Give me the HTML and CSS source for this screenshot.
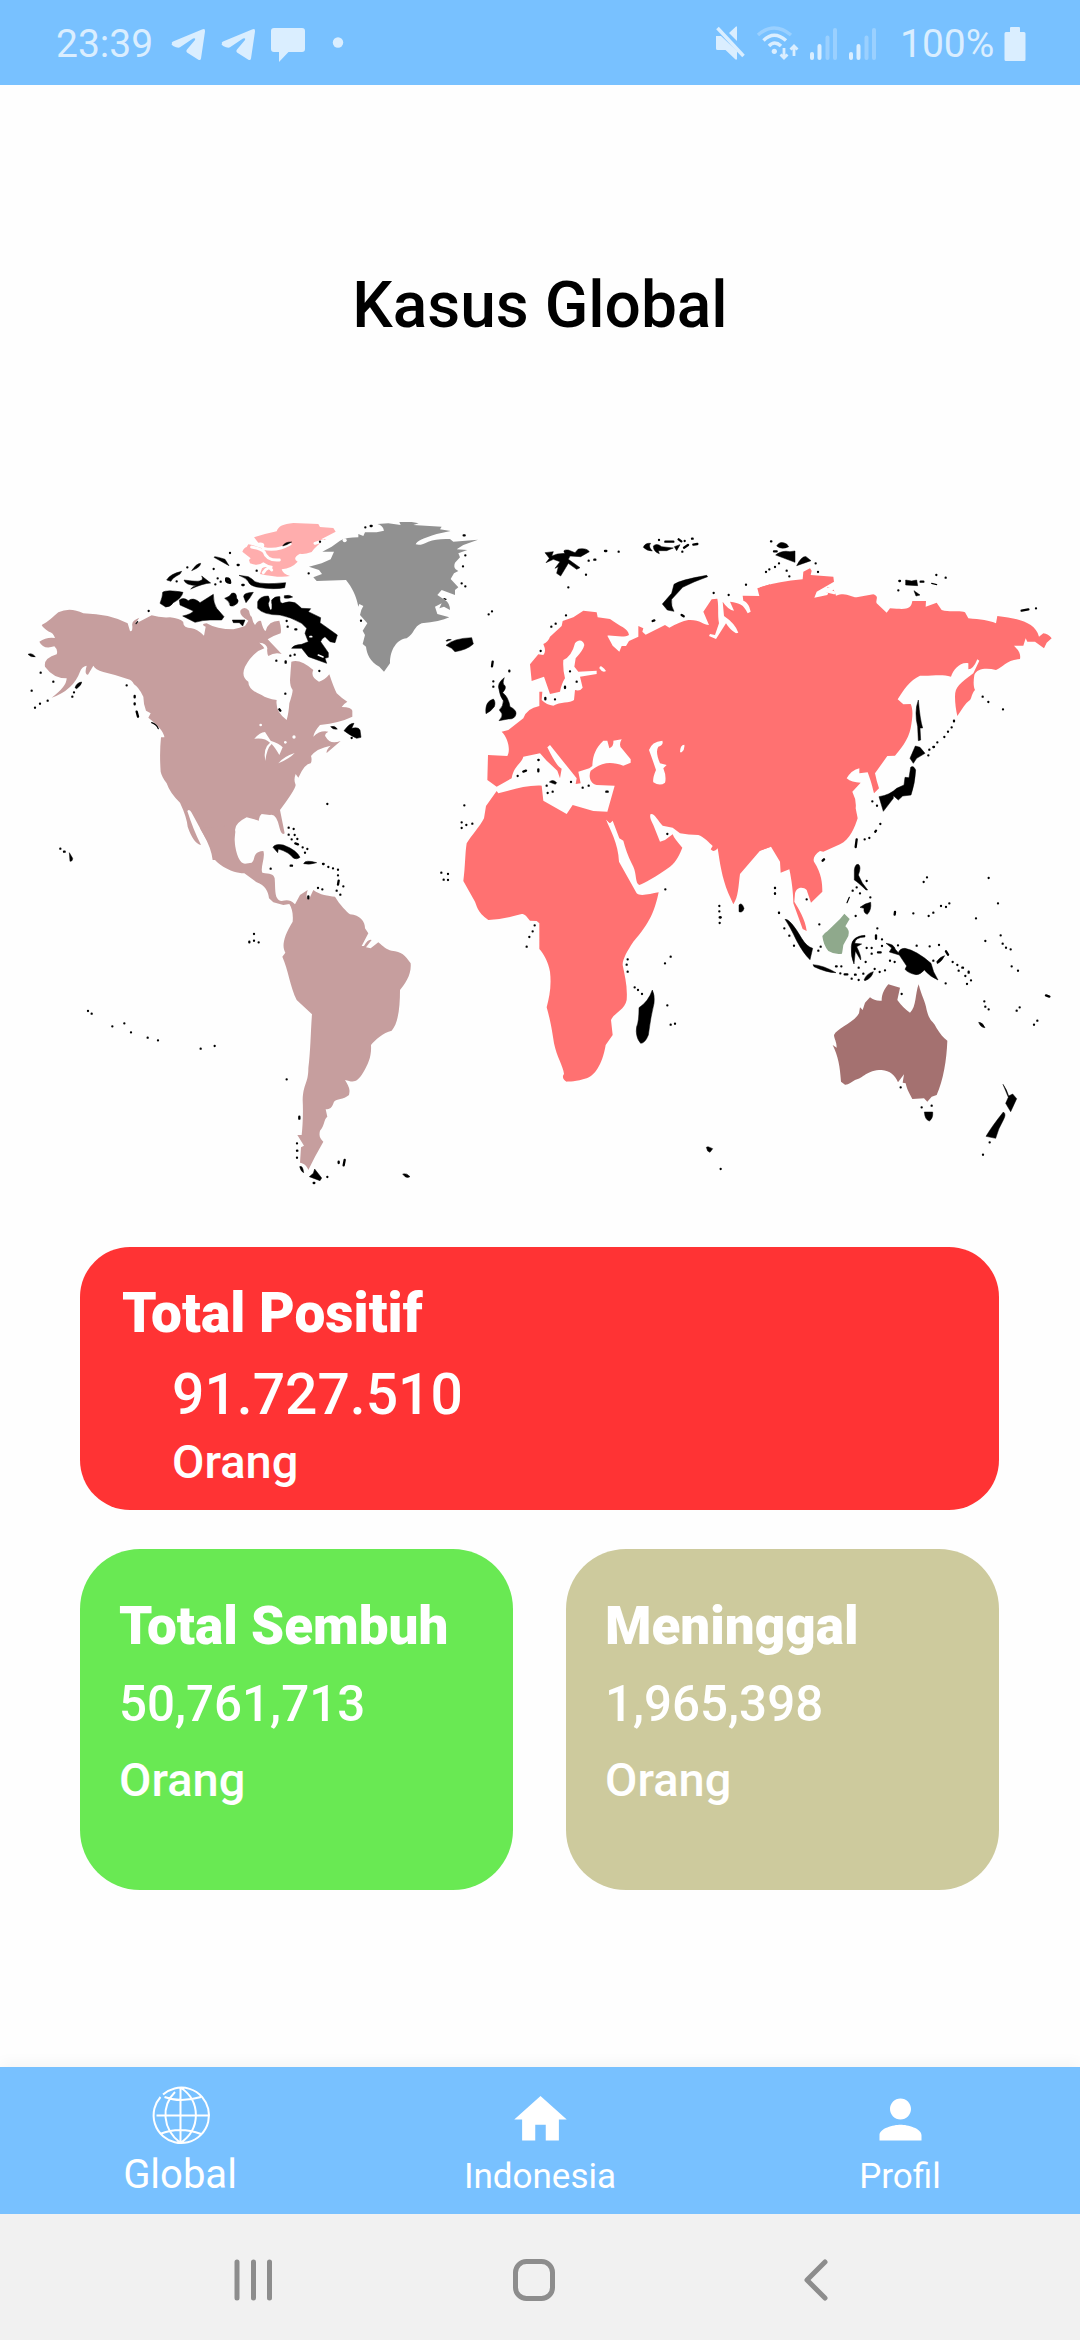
FILE: index.html
```html
<!DOCTYPE html>
<html lang="id">
<head>
<meta charset="utf-8">
<title>Kasus Global</title>
<link rel="stylesheet" href="styles.css">
</head>
<body>
<div class="screen">
  <header class="status">
    <span class="clock">23:39</span>
    <svg class="notif" width="174" height="40" viewBox="170 26 174 40">
      <path id="tg" d="M172 45.500Q171 44.500 173 43.500L202 31.500Q205.500 30 205 33.500L201 60.500Q200.500 63 198 61.500L187 54.500Q185.500 53 187 51.500L195 42Q196 39.500 193 40.500L180 49.300Q178.500 50 176 49.200Q172.500 48 171.500 46.500Z"/>
      <use href="#tg" x="50"/>
      <path d="M274 30h28q3 0 3 3v18q0 3-3 3h-13.500l-9.500 10v-10h-5q-3 0-3-3v-18q0-3 3-3z"/>
      <circle cx="338" cy="44.500" r="5.200"/>
    </svg>
    <svg class="signals" width="164" height="40" viewBox="714 26 164 40">
      <path d="M716 38h5l16 15v8.500h-1.500l-10-9.500h-8q-1.500 0-1.500-1.500zM729 35l7-6.500h1V43z"/>
      <path class="line" d="M717.500 30l26 28"/>
      <g class="line">
        <path class="dim" d="M758 37Q774 23 791 37"/>
        <path d="M763.500 42.500Q774 32 786 42.500M769 48Q774.500 42 781 48"/>
        <path class="thin" d="M784 50v10m-3.500-3.500l3.500 3.500 3.500-3.500M794 58V48m-3.500 3.500l3.500-3.500 3.500 3.500"/>
      </g>
      <circle cx="774.300" cy="53.300" r="2.600"/>
      <g class="bars">
        <path d="M812 56v4M819.500 48v12M851 56v4M858.500 48v12"/>
        <path class="dim" d="M827.500 39.500V60M835 32V60M866.500 39.500V60M874 32V60"/>
      </g>
    </svg>
    <span class="charge">100%</span>
    <svg class="battery" width="22" height="36" viewBox="0 0 22 36"><path d="M7 1h8q1 0 1 1v4h4q1.500 0 1.500 1.500v26q0 1.500-1.500 1.500H2q-1.500 0-1.500-1.500v-26Q.5 6 2 6h4V2q0-1 1-1z"/></svg>
  </header>

  <main class="content">
    <h1 class="title">Kasus Global</h1>

    <svg class="map" width="1080" height="700" viewBox="0 0 3240 2100">
      <!-- North America and the Arctic islands -->
      <path class="america" d="M125 375C145 365 160 350 175 337Q210 320 250 340Q330 342 383 370L390 393Q398 396 397 378Q393 362 418 353L405 372L455 346Q480 354 510 352Q540 355 550 366Q548 384 575 385Q592 388 612 407L617 380Q600 372 620 370Q650 388 700 388Q720 384 735 378L745 362Q715 345 722 330Q735 317 747 332Q750 348 755 350Q758 366 765 375Q775 360 783 363Q790 392 797 393Q805 362 838 362Q845 385 842 400Q818 408 803 418L845 462Q825 455 805 468Q800 458 802 445Q800 430 778 428Q790 438 793 445Q760 455 735 500Q722 530 745 545Q745 570 785 585Q800 596 830 600Q825 635 860 660Q866 640 868 610Q878 580 878 570Q870 560 870 540Q872 510 874 485Q900 475 940 510Q930 530 957 545Q975 540 988 523Q1000 560 1010 580Q1025 595 1042 605Q1030 612 1025 621Q1055 622 1057 632V650Q1020 668 960 675Q942 695 940 710Q960 690 985 695Q970 703 978 712Q990 735 1022 723L980 759Q978 750 992 737Q950 745 933 768Q937 780 932 790Q915 790 895 833L887 822Q880 840 887 855Q885 870 840 930L854 1000Q845 1008 839 985Q830 940 810 945L785 942Q775 950 777 962L740 952Q700 972 706 995Q700 1040 705 1080H638Q634 1045 610 1003L575 938Q568 925 562 933Q580 990 603 1035Q580 1030 563 980Q560 950 540 908Q510 880 500 850Q485 830 482 815Q478 760 483 712H493Q492 690 445 653L452 640L438 632Q430 610 430 590Q415 560 402 553Q395 540 385 538Q350 525 310 516Q285 508 280 497L264 524Q252 525 260 497Q245 500 240 515Q220 570 155 593Q200 560 200 535Q160 535 135 500Q130 475 170 463Q175 450 163 439Q130 450 118 425Q140 410 165 414Q160 398 147 395Q130 385 125 375Z"/>
      <g class="sea">
        <path d="M763 716Q780 697 795 696L812 722Q838 730 848 742L838 765Q825 742 815 732Q800 745 796 783Q788 745 810 728Q795 712 763 716Z"/>
        <path d="M835 790Q850 770 884 759Q870 775 835 790Z"/>
        <circle cx="782" cy="675" r="4"/><circle cx="882" cy="711" r="5"/><circle cx="856" cy="727" r="4"/>
      </g>
      <path class="ellesmere" d="M762 112Q800 100 830 94C835 78 850 72 880 69L955 72L960 81L1000 84L1007 95L965 117H978Q950 135 935 156Q910 165 900 161Q875 175 893 185Q875 205 845 208Q848 222 870 228Q840 235 780 222L786 205Q800 195 816 208L818 198Q800 195 790 187Q775 200 750 190L747 180L752 175L727 155Q732 143 740 141L745 133Q770 138 790 146Q800 125 775 128Z"/>
      <path class="channel" d="M755 141Q785 147 792 155Q800 183 838 180M790 145Q830 155 870 132M790 218Q805 195 815 210M945 130L970 122"/>
      <g class="land">
        <path d="M848 138Q855 125 875 126L860 134ZM500 240Q510 222 545 214L540 222Q515 235 513 244ZM575 212Q590 190 602 190Q602 198 590 205ZM552 240Q590 245 598 243Q612 240 605 228L632 249Q610 250 572 267Q578 258 590 257Q555 255 552 240ZM642 172Q640 166 675 178L687 197ZM717 226L745 230Q755 235 765 245Q785 255 857 248L854 263Q820 270 770 261Q750 257 745 245Q740 235 717 226Z"/>
        <path d="M480 310Q488 290 488 277Q500 268 549 277Q545 295 520 308Q510 322 497 321ZM538 300Q550 290 565 302Q580 290 600 308L640 283Q640 310 650 325L672 350L665 360H630Q610 360 585 367L548 348Q575 342 580 333L540 315ZM674 295Q690 290 695 280Q710 275 710 295Q718 302 712 310Q700 322 690 317Q690 305 674 295ZM731 290Q730 278 760 277Q750 295 738 308ZM853 287Q870 283 878 291Q865 297 853 294Z"/>
        <path d="M773 305Q780 288 805 288Q812 300 805 310Q805 325 815 327V300Q825 288 840 290Q838 310 848 310Q865 302 885 308Q895 315 905 325L932 326L925 335L962 353L960 368L1012 405L1005 428L990 425L975 410Q965 415 962 425L985 458V472L975 475L980 490L925 470L905 445L875 445Q880 435 905 433L925 425L915 400L920 385L905 370Q870 350 840 345Q790 345 773 325ZM697 360H735L728 378L718 368H700Z"/>
      </g>
      <path class="ring" d="M679 236Q690 235 690 248Q677 248 679 236Z"/>
      <path class="hole" d="M812 312v14M930 410h5M955 465l14 6"/>
      <g class="land">
        <path d="M84 463Q95 457 106 470Q93 473 84 463ZM225 563Q230 548 245 546Q245 555 230 566ZM1032 692Q1050 668 1062 670L1055 685Q1075 680 1080 690L1083 712L1070 715Q1045 703 1032 692ZM992 680Q1005 675 1012 687Q1000 690 992 680Z"/>
        <path d="M618 436Q640 415 695 413L700 432Q680 450 645 455L635 445ZM618 422Q625 416 634 419L620 424Z" transform="translate(720)"/>
        <path d="M915 158L940 155L935 168L952 162L975 160Q965 148 985 150L1005 158L1015 147Q1040 143 1048 155L1022 170L990 168L985 178L1020 203L1010 208L985 190L962 228L950 220L955 200L945 205L960 185L940 178L918 188L928 175Z" transform="translate(720)"/>
        <path d="M777 568Q770 550 793 533Q785 553 795 557Q800 565 788 578Q805 590 810 620Q830 630 828 642Q825 658 805 657L777 662Q790 648 785 640L778 630Q790 618 790 602Q780 590 777 568ZM738 641Q733 605 760 597Q768 605 763 620Q752 635 738 641Z" transform="translate(720)"/>
      </g>
      <path class="dots" d="M122 518h0M160 545h0M95 572h0M105 623h0M120 611h0M143 602h0M217 590h0M222 577h0M380 556h0M404 588v4M404 610v3M410 635l4 15M446 333h0M562 202h0M530 244h0M641 207h0M646 253h0M662 245h0M653 235h0M690 159h0M713 195h3M770 212h0M727 255h4M860 363h0M863 380h0M886 388h3M829 482h0M857 484v4M871 467h0M884 464h0M958 513h0M856 581h0M838 628l3 4M982 912h0M1055 714h0M926 220h0M960 125h0M1083 362h0M1096 82h0M1112 78h3M1391 106h3M1396 166h0M1389 199h0M1385 250h0M1396 259h0M1466 343h0M1476 334h0M1478 485l-2 14M1528 512v2M1480 544h0M1480 560h0M1393 916h0M1385 967h0M1399 975h0M1417 971h0M1385 984h0"/>
      <path class="dots fine" d="M455 668q15 5 20 18M408 371l5-6M1332 296l6 2"/>

      <path class="greenland" d="M1130 97L1152 92Q1148 75 1132 72L1165 70L1202 75L1198 66H1235L1256 70L1240 75L1325 80L1320 88L1352 93L1310 102Q1250 120 1247 133Q1262 138 1285 125Q1310 115 1350 117L1360 125L1434 119L1390 135L1370 148L1402 150L1375 160L1380 172L1365 188Q1360 200 1367 208L1375 213L1362 220L1352 237L1375 262L1365 270V285L1325 270L1312 285L1335 300Q1350 310 1350 330L1332 320L1318 325L1325 310L1305 320L1312 342L1348 352Q1320 365 1265 370C1240 380 1245 400 1220 415C1190 418 1170 450 1170 490L1152 515L1138 500C1110 485 1100 460 1098 440L1088 432L1095 405L1088 392L1102 370L1080 345Q1082 330 1090 318L1078 312L1075 320C1070 290 1055 260 1038 240L950 243L940 232L966 222L957 210L927 200L965 190L992 178L1002 155L967 155L995 140L1020 122Q1040 112 1075 112V102L1090 108L1095 97Z"/>
      <circle class="sea" cx="1034" cy="121" r="6"/>

      <!-- Europe, western and central Asia -->
      <g transform="translate(1440)">
        <path class="eurasia" d="M150 493L175 463L190 465Q200 455 190 432Q205 425 210 410L245 378L248 363L280 352L310 332L350 337L353 352L390 357C420 380 445 385 447 405C430 415 400 405 382 407L398 437L418 455L425 438H438L447 423L475 410V378L490 385L487 395L497 404L555 375L568 383Q600 365 625 360C660 358 670 375 687 375L670 335L695 298L712 296C717 320 712 340 717 370L705 405L690 402L687 408L708 417L738 370Q750 390 768 400L775 398Q765 370 732 348L728 305Q745 330 762 332L750 305C780 310 790 312 803 340L812 335C808 315 800 305 790 302L788 287L838 288L832 265L870 253V1041L840 1052L780 1122C775 1160 775 1190 760 1213L745 1180C725 1130 720 1090 713 1045Q702 1060 692 1048L698 1038C690 1030 670 1010 655 1005Q625 1005 600 1000L578 983L548 977C535 965 525 940 512 942C508 950 512 960 520 975L540 1025L555 1020L578 1003Q582 1015 607 1043C600 1060 590 1085 570 1100C530 1130 490 1150 478 1155C465 1150 470 1120 460 1100C440 1060 435 1040 430 1022L418 1015L398 962L390 970L370 950L382 935L404 857L350 855C330 850 325 830 332 812L345 803C370 785 400 785 430 797L452 788V778L425 745Q415 735 425 718L400 722Q402 740 388 745L382 722H370C345 745 338 770 337 798L328 805L295 815L302 850L287 852L290 835L210 735L202 742Q230 800 245 806L240 835L232 812L200 782L180 760L130 770C125 790 100 800 95 835L50 860L22 840L24 765L82 768C92 750 85 715 65 695L85 690L130 655Q140 625 178 618V575H187L185 600Q200 615 220 617C240 605 270 610 282 600L285 570Q300 575 308 563L300 530L350 522V512L295 515L283 500L287 475Q310 450 313 435C310 420 295 417 285 430Q275 470 250 480Q248 510 255 535Q245 550 240 575L210 582L192 530L155 543Z"/>
        <g class="sea">
          <path d="M507 750Q515 725 547 722Q552 735 535 740Q525 755 540 790L560 795L550 805Q560 830 555 848Q540 860 520 847Q517 835 528 810Q518 780 507 750ZM600 757Q600 735 613 734Q615 748 605 757ZM358 505Q360 490 378 513Q368 520 358 505Z"/>
        </g>
        <g class="land">
          <path d="M547 312L575 280L582 253Q600 240 680 226L683 230Q640 245 608 262L575 298Q572 318 582 334L562 330ZM490 142Q495 128 512 130Q503 140 517 153Q500 153 490 142ZM520 138Q530 128 545 140L580 144L560 152H535L538 161Q520 155 520 138ZM583 140L600 134L590 152ZM208 846Q218 836 230 848L226 853Z"/>
          <path d="M890 138Q900 120 920 132L926 140Q905 150 890 138ZM887 165Q905 150 930 155L945 153V187ZM950 197Q965 168 978 170L993 182Z"/>
          <path d="M777 1215Q785 1205 792 1225Q788 1240 777 1235Z"/>
        </g>
        <path class="dots" d="M326 182h0M343 179h3M375 153h4M416 155h0M318 224h0M265 262h0M537 120h0M556 125l24 0M596 118l8 6M614 123h0M636 116h2M612 143l12-8M640 134l12-2M607 155h0M518 363l5-2M605 345l6 4M258 346h0M227 371h0M214 380h0M182 453h0M270 514h0M290 545h0M255 560v4M196 594v4M225 598h0M175 780h1M175 808v6M130 815l8-3M113 828h0M200 857h0M203 879h0M218 875h0M273 846h0M308 863h0M326 857h0M379 875h4M562 1002h0M556 1168h0M701 279h0M746 285h0M798 254h0M873 124h1M882 154h8M858 216h0M868 208h0M885 201h0M897 190h0M920 212h0M928 229h0M1007 190h0M1014 216h0M885 1164h0M885 1180h0M718 1218h0M718 1234h0M721 1252h0M897 1238h0"/>
      </g>

      <!-- East Asia -->
      <g transform="translate(2220)">
        <path class="eurasia" d="M60 262Q110 245 188 238L190 215L210 205L215 212L212 225L280 230L282 245L230 275L223 293L262 285L265 278L255 275L262 262Q285 265 288 287C320 275 330 292 350 292L400 283C420 290 405 300 410 310L440 338L450 325C500 328 512 330 517 303H558L557 320L590 308L605 330C630 338 660 330 675 337L685 355C720 358 750 362 768 370L772 348C830 355 885 365 897 410L910 400Q925 402 935 415L920 428L912 445L885 425L862 425L857 415L850 437L822 437C840 455 842 465 840 477C800 480 790 500 768 510C740 503 710 505 703 525C700 545 700 560 705 570C695 580 695 595 690 600C675 610 665 630 652 648C648 630 645 610 645 590C645 560 660 550 700 520L718 482L712 478Q700 508 685 508L685 490C660 485 640 510 633 530C600 520 570 530 540 527C510 540 490 570 473 598L490 613L512 612C520 630 518 650 512 685C505 720 480 750 465 767L442 768L405 820Q410 845 417 865L402 880C395 850 388 830 383 817L358 820V805Q335 810 320 835Q335 848 362 848L337 875Q350 900 347 925L353 955C345 980 330 1020 300 1033L250 1055L240 1053C225 1062 218 1075 222 1085C245 1120 247 1150 247 1175L213 1208L200 1170C190 1160 170 1160 165 1180L163 1205C175 1225 197 1260 200 1293L188 1287L160 1210C160 1180 155 1140 148 1108L122 1118L120 1085L93 1040L60 1052Z"/>
        <path class="channel" d="M258 272l25 6M260 268l15 0"/>
        <g class="land">
          <path d="M535 600Q540 660 548 684H540L542 720L535 722L533 680Q522 635 535 600ZM526 738L540 742L555 760L530 775L520 790L510 775ZM512 802Q520 795 527 810Q525 850 513 885L488 888L475 900L460 887V895L430 934L417 890Q450 885 470 865L492 855L495 832L507 833ZM497 240L515 243L530 240L533 257L497 255ZM522 272L540 285L528 288Z"/>
          <path d="M343 1110Q345 1092 355 1093Q365 1100 355 1125Q365 1150 383 1170L378 1170Q352 1145 343 1140ZM360 1222Q375 1210 392 1207Q395 1230 382 1243Q370 1240 372 1225Z"/>
        </g>
        <path class="dots" d="M478 243h2M475 271h0M542 245h8M589 225h0M617 233h0M845 332l20-4M888 325h0M728 590h0M745 606h0M789 628h0M642 662v2M635 682h0M624 695h0M613 711h0M592 727h0M580 741h2M568 749h0M565 766h0M397 904h0M411 917h0M421 972h0M408 992l-2 3M388 1014h0M374 1018h0M350 1018l-3 23M248 1082l4-4M380 1143h0M350 1162h0M338 1172h0M360 1180h0M391 1192h0M347 1248h0M200 1198h0M561 1132h0M551 1146h0M746 1134h0M774 1210h0M628 1210h0M618 1221h0M603 1218h0M580 1238h0M566 1248h0M520 1240h0M465 1236l-1 8M708 1255h0"/>
        <path class="dots fine" d="M575 250l15 4M328 1192l-7 16"/>
      </g>

      <!-- Central and South America -->
      <g transform="translate(0 960)">
        <path class="america" d="M600 25L706 15Q700 50 704 65C708 105 720 131 735 131L755 128C768 120 755 95 790 93C797 110 780 145 787 158C810 162 820 160 824 175C827 210 822 240 845 243C860 240 870 238 885 253L900 225L923 210Q915 235 927 238L940 210C960 225 985 228 1005 230C1020 255 1040 275 1050 283C1080 285 1095 305 1095 325L1105 340L1085 378H1092Q1105 355 1115 360L1098 382L1112 385L1135 367C1150 380 1160 390 1175 392C1205 395 1215 405 1232 430C1235 465 1215 490 1200 510C1200 560 1195 610 1175 632C1150 637 1125 660 1113 675C1115 710 1105 730 1090 757C1070 790 1060 787 1035 780C1050 805 1050 810 1047 825C1030 840 1010 835 1002 845C995 865 990 867 977 868L982 890C970 900 975 915 960 932C957 945 958 955 970 965L945 1010L925 1050C920 1035 910 1030 900 1028L903 982L912 977L892 945L905 945C908 920 910 880 908 840C910 790 925 790 925 745C932 690 932 630 936 583L890 540C870 500 865 450 847 410L856 398C845 380 850 350 878 305C880 280 876 265 868 252L850 255L820 247L807 235C805 215 795 195 770 187L733 160C690 160 640 125 637 105C637 85 620 60 600 25Z"/>
        <g class="land">
          <path d="M819 82Q825 70 850 75Q890 90 900 112Q890 120 880 114Q865 95 835 87L833 98ZM911 131Q915 118 950 128Q930 135 911 131ZM208 98L218 115Q218 125 210 124ZM899 1040Q908 1035 911 1058Q903 1055 899 1040ZM944 1047L965 1074L960 1082L928 1070L940 1060ZM1208 1062Q1220 1058 1230 1070Q1218 1077 1208 1062Z"/>
        </g>
        <path class="dots" d="M181 86h0M192 95h2M264 573h0M275 581h0M337 619h0M373 610h0M393 637h0M443 653h0M474 661h0M602 686h0M644 678h0M860 778h0M898 890v6M891 970h0M891 992h1M891 1013h0M941 1089h2M982 1071h0M1016 1025v4M1034 1020l-3 16M748 365v2M762 342h0M762 362h0M776 367h0M812 146h0M872 137h4M866 23h0M881 27h0M866 44h0M884 45h0M875 58h0M892 57h0M886 70l8 3M908 82h0M922 87h0M915 98h0M969 132h2M985 141h0M999 145h0M1014 149h0M1014 166h0M1016 182l-2 12M1030 199h0M1010 212h0M1021 224h0M954 204h0M967 208h0M925 229v6"/>
      </g>

      <!-- Africa -->
      <g transform="translate(1320 840)">
        <path class="eurasia" d="M502 95L516 122L508 128L498 118C510 150 535 190 537 245L590 340C600 350 630 342 656 337C645 390 630 430 580 485C560 515 547 540 548 555C555 590 563 620 560 660C555 690 520 700 513 720L518 765L497 795C490 840 470 885 440 895C410 905 385 905 380 905C370 900 365 890 372 882C370 860 350 830 342 790C335 740 328 710 320 682C328 650 335 620 330 575C325 545 310 520 298 507V430L290 423L270 422C260 410 255 402 245 402C210 412 180 418 145 420C110 395 110 375 105 365L70 303C76 260 75 220 80 190C95 165 120 140 132 115L138 78L170 33L175 40C220 28 260 15 305 17L310 62L380 102L398 75L460 93Z"/>
        <path class="land" d="M637 630Q645 645 642 670Q632 710 625 765Q615 790 602 790Q585 770 590 740Q597 725 597 683Q625 665 637 630ZM799 1102L804 1100L818 1106L810 1117L803 1113Z"/>
        <path class="dots" d="M4 278h0M24 282h0M11 299h0M24 300h0M284 436h0M278 454h0M268 471h0M260 500h0M563 538h0M560 554h0M563 575h0M584 622h0M594 630h0M606 642h0M675 550h0M692 530h0M682 676h0M692 734h0M705 731h0M839 412h3M839 429h0M842 1167h0"/>
      </g>

      <!-- South-east Asia and Oceania -->
      <g transform="translate(2220 960)">
        <path class="borneo" d="M247 348Q255 338 262 334L300 297L313 281L329 297L316 319Q330 330 325 348L310 375Q308 390 306 401Q285 405 265 393Q250 375 247 348Z"/>
        <path class="australia" d="M282 645C290 625 340 610 357 580L360 562L368 570L375 548L390 532C400 540 410 543 425 542C425 520 435 505 445 493L480 503L472 540Q490 565 510 578C530 560 525 520 536 493C545 530 555 540 560 570C570 610 580 600 590 625C600 640 610 655 622 662C620 720 610 780 590 825L575 830L562 845L552 835L517 837C505 815 500 805 497 790L488 788L492 763L474 787C465 765 450 752 425 750C380 750 370 775 345 780C335 785 325 795 315 794L303 785C300 740 295 710 278 675L290 683C290 665 282 655 282 645Z"/>
        <g class="land">
          <path d="M135 298Q150 295 185 355Q200 380 218 385L210 419Q190 400 170 362Q150 320 135 298ZM219 434Q250 436 288 458Q260 458 222 440ZM372 480Q380 460 400 455Q395 475 375 482ZM438 370Q462 372 466 388L475 398Q480 385 495 385Q530 392 573 430Q578 455 594 480Q570 470 553 450Q540 465 528 464Q505 460 495 448L500 438L478 405L448 396L455 384ZM590 425Q600 410 614 407Q605 425 592 431ZM553 876H578Q580 895 568 903Q555 900 553 876ZM789 793Q800 808 806 828L818 822L830 836L812 875L797 850L805 832ZM790 876Q800 882 790 900Q775 925 767 955L738 949Q755 920 790 876ZM716 607Q728 607 735 623Q722 623 716 607Z"/>
          <path d="M334 380Q335 348 375 346V351Q345 352 344 370L365 372L350 380Q365 410 362 420L346 393L342 432Q332 410 334 380Z"/>
        </g>
        <path class="dots" d="M105 204h0M105 221h0M117 279h0M133 325h0M148 347h0M162 377h0M238 313h0M242 380h0M235 392h0M288 439h2M304 439h0M301 460h0M314 463h8M345 464h2M335 476h0M356 480h0M370 461h0M356 443h0M377 426h0M404 447h0M419 456h0M435 451h0M450 422h0M464 426h0M412 325h0M408 346v10M426 358h0M426 378h0M414 397h8M395 401h0M395 384h0M380 384h0M474 376h0M530 377h0M569 379h0M597 375h0M618 394l6 10M580 422h0M638 426h0M652 435h0M656 452h0M667 443h2M686 455v3M676 468h0M693 481h0M681 492h0M617 490h0M485 522h0M482 802h0M545 862h0M575 857h0M749 967h0M729 1004h0M736 363h0M782 346h0M788 371h0M798 383h0M812 388h0M815 439h0M834 452h0M918 526l10 4M892 602h0M882 614h0M839 562h0M830 572h0M733 544h0M736 560h0M746 568h0"/>
      </g>
    </svg>

    <section class="card positive">
      <h2 class="name">Total Positif</h2>
      <p class="figure">91.727.510</p>
      <p class="unit">Orang</p>
    </section>
    <div class="pair">
      <section class="card recovered">
        <h2 class="name">Total Sembuh</h2>
        <p class="figure">50,761,713</p>
        <p class="unit">Orang</p>
      </section>
      <section class="card deaths">
        <h2 class="name">Meninggal</h2>
        <p class="figure">1,965,398</p>
        <p class="unit">Orang</p>
      </section>
    </div>
  </main>

  <nav class="tabs">
    <a class="tab active">
      <svg class="tab-icon" width="63" height="63" viewBox="0 0 63 63">
        <g class="globe"><path d="M14 10.500A27.700 27.700 0 1 1 11.500 13M31.500 3.500v56M7.500 31.500h52M26 8C12 22 13 45 31.500 59M31.500 3.500C52 17 52 45 31.500 59M15.500 13Q31 19 52 13M11 50Q31 42 52 50"/></g>
      </svg>
      <span>Global</span>
    </a>
    <a class="tab">
      <svg class="tab-icon" width="63" height="63" viewBox="0 0 24 24"><path d="M10 20v-6h4v6h5v-8h3L12 3 2 12h3v8z"/></svg>
      <span>Indonesia</span>
    </a>
    <a class="tab">
      <svg class="tab-icon" width="63" height="63" viewBox="0 0 24 24"><path d="M12 12c2.210 0 4-1.790 4-4s-1.790-4-4-4-4 1.790-4 4 1.790 4 4 4zm0 2c-2.670 0-8 1.340-8 4v2h16v-2c0-2.660-5.330-4-8-4z"/></svg>
      <span>Profil</span>
    </a>
  </nav>

  <footer class="system">
    <svg width="40" height="46" viewBox="0 0 40 46"><path d="M4 5v36M20.500 5v36M36.500 5v36"/></svg>
    <svg class="home" width="46" height="46" viewBox="0 0 46 46"><rect x="4.500" y="4.500" width="37" height="37" rx="11"/></svg>
    <svg width="26" height="46" viewBox="0 0 26 46"><path d="M22 5L4 23l18 18"/></svg>
  </footer>
</div>
</body>
</html>
```
FILE: styles.css
```css
* { box-sizing: border-box; }
body { margin: 0; background: #fefefe; font-family: Roboto, sans-serif; }
h1, h2, p { margin: 0; }
svg { display: block; flex: none; }

.screen { width: 1080px; height: 2340px; display: flex; flex-direction: column; }

.status {
  height: 85px;
  padding: 3px 54px 0 56px;
  display: flex;
  align-items: center;
  background: #78c1ff;
  color: #daeeff;
  fill: #daeeff;
  font-size: 39px;
}
.clock { width: 114px; }
.signals { margin-left: auto; }
.charge { width: 102px; margin-left: 22px; }
.battery { margin-left: 2px; }
.line { fill: none; stroke: #daeeff; stroke-width: 3.500; }
.thin { stroke-width: 2.800; }
.dim { opacity: .35; }
.bars { fill: none; stroke: #daeeff; stroke-width: 4; stroke-linecap: round; }

.content { flex: 1; display: flex; flex-direction: column; }
.title {
  height: 415px;
  padding-top: 181px;
  text-align: center;
  font-size: 64px;
  line-height: 80px;
  font-weight: 500;
  color: #000;
}

.map { margin-bottom: 47px; }
.america { fill: #c69e9e; }
.eurasia { fill: #ff7171; }
.ellesmere { fill: #ffadad; }
.greenland { fill: #919191; }
.australia { fill: #a47170; }
.borneo { fill: #8fa98c; }
.sea { fill: #fefefe; }
.land { fill: #000; stroke: #000; stroke-width: 1.500; }
.channel { fill: none; stroke: #fefefe; stroke-width: 9; stroke-linecap: round; }
.hole { fill: none; stroke: #fefefe; stroke-width: 5; stroke-linecap: round; }
.ring { fill: none; stroke: #000; stroke-width: 8; stroke-linejoin: round; }
.dots { fill: none; stroke: #000; stroke-width: 7; stroke-linecap: round; }
.fine { stroke-width: 3.500; }

.card { color: #fff; font-weight: 500; }
.name { font-weight: 900; font-size: 55px; line-height: 64px; }
.unit { font-size: 47px; line-height: 60px; }
.positive {
  height: 263px;
  margin: 0 81px 39px 80px;
  padding: 34px 42px;
  border-radius: 50px;
  background: #ff3334;
}
.positive .figure { margin-top: 16px; padding-left: 50px; font-size: 57px; line-height: 68px; }
.positive .unit { margin-top: 3px; padding-left: 50px; }
.pair { display: flex; gap: 53px; padding: 0 81px 0 80px; }
.pair .card { flex: 1; height: 341px; padding: 45px 39px; border-radius: 60px; }
.pair .name { font-size: 53px; }
.pair .figure { margin-top: 12px; font-size: 49.300px; line-height: 68px; }
.pair .unit { margin-top: 12px; }
.recovered { background: #69e953; }
.deaths { background: #cdca9d; }

.tabs {
  height: 147px;
  display: grid;
  grid-template-columns: repeat(3, 1fr);
  background: #78c1ff;
  box-shadow: 0 -4px 14px rgba(0, 0, 0, .04);
}
.tab {
  padding-top: 17px;
  display: flex;
  flex-direction: column;
  align-items: center;
  color: #fff;
  fill: #fff;
  font-size: 35px;
  line-height: 44px;
}
.tab-icon { margin-top: 4px; margin-bottom: 4px; }
.active { font-size: 40px; }
.active .tab-icon { margin-top: 0; margin-bottom: 6px; }
.globe { fill: none; stroke: #fff; stroke-width: 2; }

.system {
  height: 126px;
  padding: 6px 251px 0 233px;
  display: flex;
  justify-content: space-between;
  align-items: center;
  background: #f1f1f1;
}
.system svg { fill: none; stroke: #8d8d8d; stroke-width: 5; stroke-linecap: round; stroke-linejoin: round; }
.system .home { margin-right: 8px; }
```
